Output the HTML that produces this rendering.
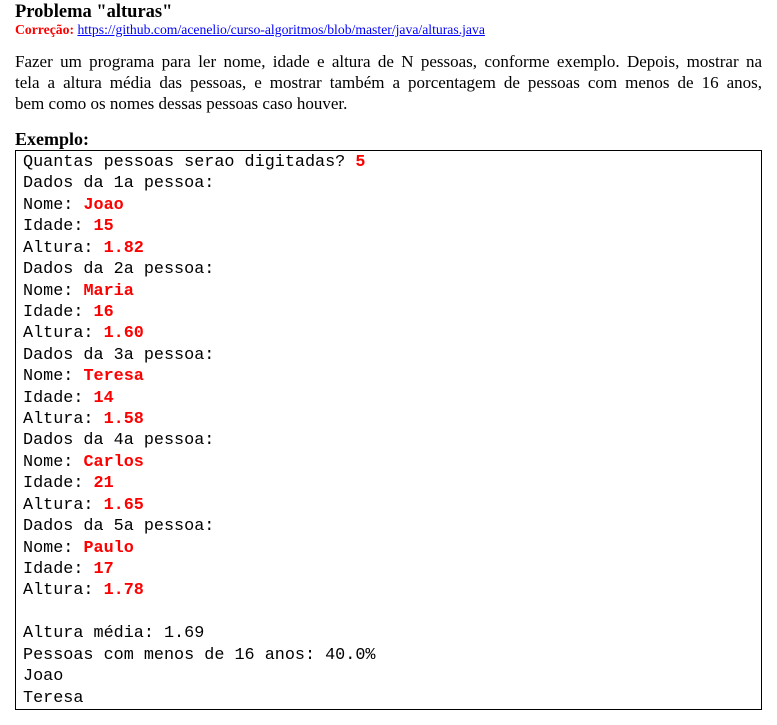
<!DOCTYPE html>
<html><head><meta charset="utf-8"><style>
body{margin:0;background:#fff;font-family:"Liberation Serif",serif;color:#000}
.t{position:absolute;left:15px;top:2px;font-weight:bold;font-size:18.5px}
.c{position:absolute;left:15px;top:22px;font-size:13.7px}
.c b{color:#f00}.c a{color:#00f;text-decoration:underline}
.p{position:absolute;left:15px;top:51px;width:747px;font-size:17px;line-height:21px;white-space:nowrap}
.p span{display:block;text-align:justify;text-align-last:justify}
.p span.l{text-align-last:left}
.e{position:absolute;left:15px;top:129px;font-weight:bold;font-size:18px}
.box{position:absolute;left:15px;top:150px;width:745px;height:558px;border:1px solid #000}
pre{margin:0;position:absolute;left:7px;top:1px;font-family:"Liberation Mono",monospace;font-size:16.8px;line-height:21.42px;color:#000}
pre b{color:#f00}
</style></head><body>
<div class="t">Problema "alturas"</div>
<div class="c"><b>Correção:</b> <a>https://github.com/acenelio/curso-algoritmos/blob/master/java/alturas.java</a></div>
<div class="p"><span>Fazer um programa para ler nome, idade e altura de N pessoas, conforme exemplo. Depois, mostrar na</span><span>tela a altura média das pessoas, e mostrar também a porcentagem de pessoas com menos de 16 anos,</span><span class="l">bem como os nomes dessas pessoas caso houver.</span></div>
<div class="e">Exemplo:</div>
<div class="box"><pre>Quantas pessoas serao digitadas? <b>5</b>
Dados da 1a pessoa:
Nome: <b>Joao</b>
Idade: <b>15</b>
Altura: <b>1.82</b>
Dados da 2a pessoa:
Nome: <b>Maria</b>
Idade: <b>16</b>
Altura: <b>1.60</b>
Dados da 3a pessoa:
Nome: <b>Teresa</b>
Idade: <b>14</b>
Altura: <b>1.58</b>
Dados da 4a pessoa:
Nome: <b>Carlos</b>
Idade: <b>21</b>
Altura: <b>1.65</b>
Dados da 5a pessoa:
Nome: <b>Paulo</b>
Idade: <b>17</b>
Altura: <b>1.78</b>

Altura média: 1.69
Pessoas com menos de 16 anos: 40.0%
Joao
Teresa</pre></div>
</body></html>
